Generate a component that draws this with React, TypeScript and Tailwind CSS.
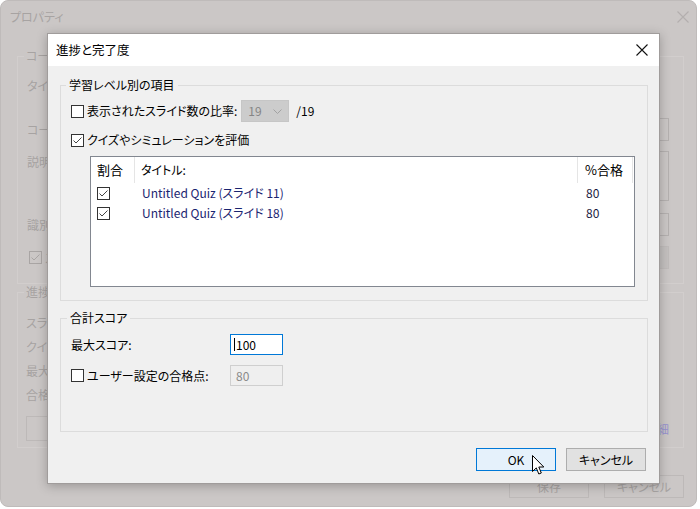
import React from 'react';

const jp = "font-['Noto_Sans_CJK_JP','Noto_Sans',sans-serif] [font-feature-settings:'palt']";

function Check({ checked = false, faded = false }: { checked?: boolean; faded?: boolean }) {
  return (
    <span
      className={`flex h-[13px] w-[13px] shrink-0 items-center justify-center border ${
        faded ? 'border-[#a9a5a4] bg-transparent' : 'border-[#333333] bg-white'
      }`}
    >
      {checked && (
        <svg width="11" height="11" viewBox="0 0 11 11" fill="none">
          <path d="M1.5 5.5 L4 8 L9.5 2.5" stroke={faded ? '#a9a5a4' : '#444'} strokeWidth="1" />
        </svg>
      )}
    </span>
  );
}

function CloseIcon({ color }: { color: string }) {
  return (
    <svg width="12" height="12" viewBox="0 0 12 12" fill="none">
      <path d="M0.5 0.5 L11.5 11.5 M11.5 0.5 L0.5 11.5" stroke={color} strokeWidth="1.1" />
    </svg>
  );
}

/** Faded parent window ("プロパティ") behind the modal. */
function ParentWindow() {
  const faded = 'text-[#a7a3a2]';
  return (
    <div className="flex h-[507px] w-[697px] flex-col rounded-lg border border-[#bfbbba] bg-[#cbc7c6] text-[12px]">
      <div className="flex h-[32px] items-center justify-between pl-[9px] pr-[7px]">
        <span className={faded}>プロパティ</span>
        <CloseIcon color="#b3afae" />
      </div>

      <div className="flex flex-1 flex-col pl-[16px] pr-[12px]">
        <fieldset className="mt-[15px] h-[236px] border border-[#d2cecd] pl-[9px] pr-[14px]">
          <legend className={`ml-[-3px] px-[2px] leading-[16px] ${faded}`}>コース</legend>
          <div className="mt-[11px] flex h-[22px] items-center">
            <span className={faded}>タイトル</span>
          </div>
          <div className="mt-[21px] flex h-[23px] items-center justify-between">
            <span className={faded}>コース名</span>
            <span className="h-[23px] w-[200px] border border-[#b5b1b0]" />
          </div>
          <div className="mt-[10px] flex h-[50px] items-start justify-between">
            <span className={`mt-[2px] ${faded}`}>説明</span>
            <span className="h-[50px] w-[200px] border border-[#b5b1b0]" />
          </div>
          <div className="mt-[12px] flex h-[23px] items-center justify-between">
            <span className={faded}>識別子</span>
            <span className="h-[23px] w-[200px] border border-[#b5b1b0]" />
          </div>
          <div className="mt-[10px] flex h-[23px] items-center justify-between">
            <span className="ml-[2px] flex items-center gap-[3px]">
              <Check checked faded />
              <span className={faded}>スライド</span>
            </span>
            <span className="h-[23px] w-[200px] border border-[#c0bcbb] bg-[#c4c0bf]" />
          </div>
        </fieldset>

        <fieldset className="h-[164px] border border-[#d2cecd] pl-[8px] pr-[14px]">
          <legend className={`ml-[-2px] px-[2px] leading-[16px] ${faded}`}>進捗</legend>
          <div className={`mt-[15px] flex flex-col gap-[8px] leading-[16px] ${faded}`}>
            <span>スライド</span>
            <span>クイズ</span>
            <span>最大</span>
            <span>合格</span>
          </div>
          <div className="mt-[13px] flex items-center justify-between">
            <span className={`flex h-[25px] w-[100px] items-center justify-center border border-[#bdb9b8] ${faded}`}>
              カスタム
            </span>
            <span className="text-[#9894d0]">詳細</span>
          </div>
        </fieldset>

        <div className="mt-[27px] flex justify-end gap-[15px]">
          <span className={`flex h-[23px] w-[80px] items-center justify-center border border-[#bdb9b8] ${faded}`}>
            保存
          </span>
          <span className={`flex h-[23px] w-[80px] items-center justify-center border border-[#bdb9b8] ${faded}`}>
            キャンセル
          </span>
        </div>
      </div>
    </div>
  );
}

function Cursor() {
  return (
    <svg width="13" height="21" viewBox="0 0 13 21" className="absolute left-[484px] top-[421px]">
      <path
        d="M0.5 0.5 L0.5 16.5 L4.3 12.9 L6.8 19 L9.3 18 L6.8 12 L11.8 12 Z"
        fill="white"
        stroke="black"
        strokeWidth="1"
        strokeLinejoin="miter"
      />
    </svg>
  );
}

function ProgressDialog() {
  const cols = 'grid grid-cols-[44px_443px_55px_1fr]';
  return (
    <div className="absolute left-[47px] top-[33px] flex h-[451px] w-[613px] flex-col border border-[#a09c9b] bg-[#f0f0f0] text-[12px] text-black shadow-[0_2px_10px_rgba(0,0,0,0.25)]">
      <div className="flex h-[32px] shrink-0 items-center justify-between bg-white pl-[8px] pr-[11px]">
        <span className="text-[12.5px]">進捗と完了度</span>
        <CloseIcon color="#111" />
      </div>

      <fieldset className="ml-[12px] mr-[11px] mt-[11px] h-[224px] border border-[#dcdcdc] pl-[10px] pr-[12px]">
        <legend className="ml-[-5px] px-[3px] leading-[16px]">学習レベル別の項目</legend>

        <div className="mt-[7px] flex h-[22px] items-center">
          <Check />
          <span className="ml-[3px]">表示されたスライド数の比率:</span>
          <span className="ml-[4px] flex h-[22px] w-[48px] items-center justify-between border border-[#c6c6c6] bg-[#cccccc] pl-[6px] pr-[6px] text-[#858585]">
            19
            <svg width="9" height="5" viewBox="0 0 9 5" fill="none">
              <path d="M0.5 0.5 L4.5 4.5 L8.5 0.5" stroke="#a2a2a2" />
            </svg>
          </span>
          <span className="ml-[7px]">/19</span>
        </div>

        <div className="mt-[8px] flex h-[20px] items-center">
          <Check checked />
          <span className="ml-[3px]">クイズやシミュレーションを評価</span>
        </div>

        <div className="ml-[19px] mt-[6px] h-[131px] w-[545px] border border-[#828790] bg-white">
          <div className={`${cols} h-[26px]`}>
            <div className="flex items-center border-r border-[#e5e5e5] pl-[6px] text-[13px]">割合</div>
            <div className="flex items-center border-r border-[#e5e5e5] pl-[6px]">タイトル:</div>
            <div className="flex items-center border-r border-[#e5e5e5] pl-[7px] text-[13px]">%合格</div>
            <div />
          </div>
          {['11', '18'].map((n) => (
            <div key={n} className={`${cols} h-[20px] items-center`}>
              <div className="flex items-center pl-[6px]">
                <Check checked />
              </div>
              <div className="pl-[7px] text-[#1a2470]">Untitled Quiz (スライド {n})</div>
              <div className="pl-[8px] text-[#1a1a40]">80</div>
              <div />
            </div>
          ))}
        </div>
      </fieldset>

      <fieldset className="ml-[12px] mr-[11px] mt-[9px] h-[122px] border border-[#dcdcdc] pl-[10px]">
        <legend className="ml-[-4px] px-[3px] leading-[16px]">合計スコア</legend>

        <div className="mt-[8px] flex h-[21px] items-center">
          <span className="w-[159px]">最大スコア:</span>
          <span className="flex h-[21px] w-[53px] items-center border border-[#0078d7] bg-white pl-[3px]">
            <span className="mr-[1px] h-[13px] w-px bg-black" />
            100
          </span>
        </div>

        <div className="mt-[10px] flex h-[21px] items-center">
          <span className="flex w-[159px] items-center">
            <Check />
            <span className="ml-[3px]">ユーザー設定の合格点:</span>
          </span>
          <span className="flex h-[21px] w-[53px] items-center border border-[#cfcfcf] bg-[#efefef] pl-[5px] text-[#8a8a8a]">
            80
          </span>
        </div>
      </fieldset>

      <div className="mt-[16px] flex justify-end gap-[10px] pr-[13px]">
        <button className="flex h-[23px] w-[80px] items-center justify-center border border-[#0078d7] bg-[#e5f1fb] text-[12px]">
          OK
        </button>
        <button className="flex h-[23px] w-[80px] items-center justify-center border border-[#adadad] bg-[#e1e1e1] text-[12px]">
          キャンセル
        </button>
      </div>

      <Cursor />
    </div>
  );
}

export default function App() {
  return (
    <div className={`relative h-[509px] w-[700px] overflow-hidden bg-white ${jp}`}>
      <ParentWindow />
      <ProgressDialog />
    </div>
  );
}
